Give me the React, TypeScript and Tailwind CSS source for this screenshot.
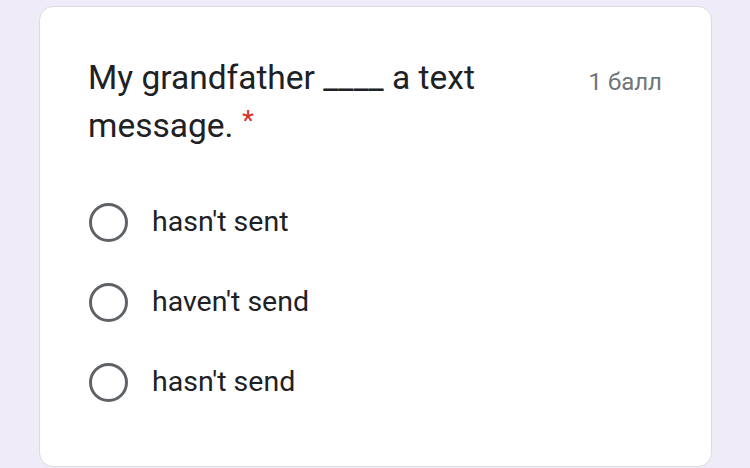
import React from "react";

const options = ["hasn't sent", "haven't send", "hasn't send"];

export default function App() {
  return (
    <div className="w-[750px] h-[468px] bg-[#efebf8] overflow-hidden pt-[6px] pl-[39px]" style={{ fontFamily: "Roboto, 'Noto Sans', sans-serif" }}>
      <div className="w-[673px] h-[461px] bg-white rounded-[14px] border border-[#dadce0] pl-[48px] pr-[48px] pt-[48px]">
        <div className="flex items-start justify-between">
          <div className="text-[33.5px] leading-[48px] text-[#202124] w-[440px] -mt-[1px]">
            My grandfather ____ a text message.
            <span className="inline-block text-[#d93025] text-[27px] leading-[27px] align-top mt-[6px] ml-[9px]">*</span>
          </div>
          <div className="text-[24px] leading-[48px] text-[#70757a] pr-[1px] mt-[3px]">1 балл</div>
        </div>
        <div className="flex flex-col gap-[41px] mt-[53px]">
          {options.map((o) => (
            <div key={o} className="flex items-center h-[39px]">
              <div className="w-[39px] h-[39px] rounded-full border-[3px] border-[#5f6368] ml-[1px]" />
              <span className="ml-[24px] text-[28.5px] text-[#202124]">{o}</span>
            </div>
          ))}
        </div>
      </div>
    </div>
  );
}
